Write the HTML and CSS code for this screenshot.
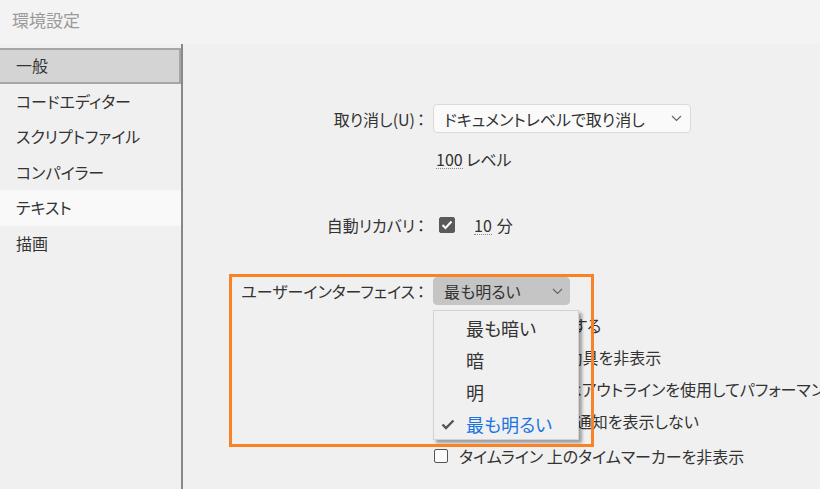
FILE: index.html
```html
<!DOCTYPE html>
<html lang="ja">
<head>
    <meta charset="UTF-8">
    <title>環境設定</title>
    <link rel="stylesheet" href="styles.css">
</head>
<body>
    <div class="title">環境設定</div>
    <div class="main">
        <div class="sidebar">
            <div class="nav-item active">一般</div>
            <div class="nav-item">コードエディター</div>
            <div class="nav-item">スクリプトファイル</div>
            <div class="nav-item">コンパイラー</div>
            <div class="nav-item hover">テキスト</div>
            <div class="nav-item">描画</div>
        </div>

        <div class="content">
            <div class="form">
                <div class="label">取り消し(U)<span class="colon">：</span></div>
                <div class="select">
                    <span>ドキュメントレベルで取り消し</span>
                    <svg class="chevron" width="11" height="7" viewBox="0 0 11 7"><path d="M1 1l4.5 4.5L10 1" fill="none" stroke="#666" stroke-width="1.2"/></svg>
                </div>

                <div></div>
                <div class="level"><span class="num">100</span> レベル</div>

                <div class="label row-auto">自動リカバリ<span class="colon">：</span></div>
                <div class="row-auto auto">
                    <span class="check on">
                        <svg width="12" height="10" viewBox="0 0 12 10"><path d="M1.5 5l3 3 6-6.5" fill="none" stroke="#fff" stroke-width="2"/></svg>
                    </span>
                    <span class="num">10</span> 分
                </div>

                <div class="label row-ui">ユーザーインターフェイス<span class="colon">：</span></div>
                <div class="row-ui">
                    <div class="select dark">
                        <span>最も明るい</span>
                        <svg class="chevron" width="11" height="7" viewBox="0 0 11 7"><path d="M1 1l4.5 4.5L10 1" fill="none" stroke="#666" stroke-width="1.2"/></svg>
                    </div>
                </div>

                <div></div>
                <div class="options">
                    <div class="option"><span class="check"></span>アイコンを小さくする</div>
                    <div class="option"><span class="check"></span>ステージ上の補助具を非表示</div>
                    <div class="option"><span class="check"></span>スクロール時にはアウトラインを使用してパフォーマンスを向上</div>
                    <div class="option"><span class="check"></span>アップデート時の通知を表示しない</div>
                    <div class="option"><span class="check"></span>タイムライン 上のタイムマーカーを非表示</div>
                </div>
            </div>

            <div class="menu">
                <div class="menu-item">最も暗い</div>
                <div class="menu-item">暗</div>
                <div class="menu-item">明</div>
                <div class="menu-item selected">
                    <svg class="tick" width="14" height="11" viewBox="0 0 14 11"><path d="M1.5 5.5l3.5 3.5 7.5-7.5" fill="none" stroke="#555" stroke-width="2.4"/></svg>
                    最も明るい
                </div>
            </div>

            <div class="highlight"></div>
        </div>
    </div>
</body>
</html>
```

FILE: styles.css
```css
body {
    margin: 0;
    background-color: #f0f0f0;
    font-family: "Noto Sans CJK JP", "Noto Sans", sans-serif;
    font-feature-settings: "palt";
    color: #333;
    width: 820px;
    height: 489px;
    overflow: hidden;
}
.title {
    height: 44px;
    line-height: 40px;
    padding-left: 12px;
    font-size: 17px;
    color: #9a9a9a;
    background-color: #f3f3f3;
}
.main {
    display: flex;
    height: 445px;
}
.sidebar {
    flex: 0 0 181px;
    padding-top: 4px;
    border-right: 2px solid #888;
}
.nav-item {
    height: 35.5px;
    line-height: 35px;
    padding-left: 16px;
    font-size: 16px;
    box-sizing: border-box;
    white-space: nowrap;
}
.nav-item.active {
    background-color: #d4d4d4;
    border: 2px solid #a6a6a6;
    border-left: none;
    line-height: 31px;
}
.nav-item.hover {
    background-color: #f9f9f9;
}
.content {
    flex: 1;
    min-width: 0;
    overflow: hidden;
    position: relative;
    padding-top: 60px;
}
.form {
    display: grid;
    grid-template-columns: 246px 1fr;
    column-gap: 4px;
    align-items: center;
    font-size: 16px;
}
.label {
    text-align: right;
    white-space: nowrap;
}
.colon {
    font-feature-settings: normal;
    margin-left: -2px;
}
.select {
    width: 258px;
    height: 29px;
    box-sizing: border-box;
    display: flex;
    align-items: center;
    justify-content: space-between;
    padding: 0 8px 0 10px;
    background-color: #fafafa;
    border: 1px solid #dadada;
    border-radius: 4px;
}
.select.dark {
    width: 137px;
    height: 28px;
    background-color: #c5c5c5;
    border-color: #c5c5c5;
    padding-right: 6px;
}
.level {
    margin-top: 13px;
    padding-left: 3px;
    line-height: 26px;
}
.num {
    border-bottom: 1px dotted #8a8a8a;
    line-height: 18px;
    display: inline-block;
}
.row-auto {
    margin-top: 41px;
}
.auto {
    display: flex;
    align-items: center;
    gap: 5px;
    padding-left: 6px;
}
.auto .check.on {
    margin-right: 14px;
}
.check {
    width: 14px;
    height: 14px;
    box-sizing: border-box;
    border: 1px solid #555;
    border-radius: 2px;
    background-color: #fbfbfb;
    display: inline-flex;
    align-items: center;
    justify-content: center;
    flex-shrink: 0;
}
.check.on {
    width: 16px;
    height: 16px;
    background-color: #5a5a5a;
    border-color: #5a5a5a;
}
.row-ui {
    margin-top: 40px;
}
.options {
    margin-top: 4px;
    padding-left: 1px;
    white-space: nowrap;
}
.option {
    display: flex;
    align-items: center;
    gap: 11px;
    height: 32px;
}
.option:last-child {
    margin-top: 3px;
}
.menu {
    position: absolute;
    left: 250px;
    top: 266px;
    width: 146px;
    height: 130px;
    box-sizing: border-box;
    padding-top: 1px;
    background-color: #f0f0f0;
    border: 1px solid #d2d2d2;
    box-shadow: 3px 3px 3px rgba(0,0,0,0.35);
}
.menu-item {
    position: relative;
    height: 32px;
    line-height: 32px;
    padding-left: 32px;
    font-size: 18px;
}
.menu-item.selected {
    color: #1a75e2;
}
.tick {
    position: absolute;
    left: 7px;
    top: 11px;
}
.highlight {
    position: absolute;
    left: 46px;
    top: 230px;
    width: 365px;
    height: 173px;
    box-sizing: border-box;
    border: 3px solid #f98226;
}
```
